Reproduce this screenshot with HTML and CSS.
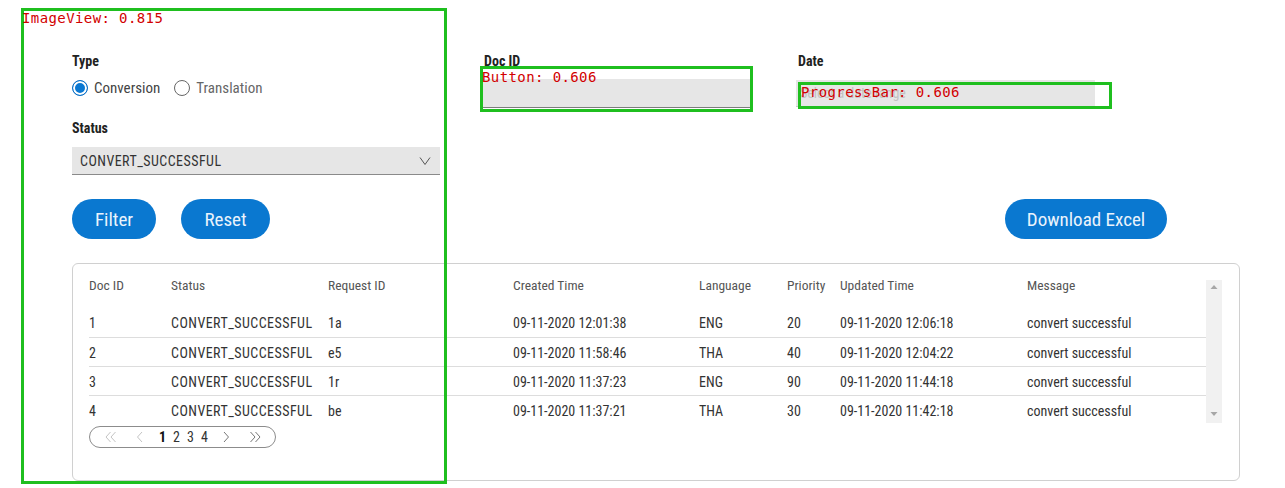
FILE: index.html
```html
<!DOCTYPE html>
<html lang="en">
<head>
<meta charset="utf-8">
<title>Documents</title>
<link rel="stylesheet" href="styles.css">
</head>
<body>
<div class="page">
  <div class="filters">
    <div class="col col-type">
      <div class="label">Type</div>
      <div class="radios">
        <span class="radio"><span class="dot dot-on"></span>Conversion</span>
        <span class="radio radio-off"><span class="dot"></span>Translation</span>
      </div>
      <div class="label label-status">Status</div>
      <div class="select">
        <span class="caps">CONVERT_SUCCESSFUL</span>
        <svg class="caret" width="12" height="10" viewBox="0 0 12 10"><polyline points="1,1.5 6,8.5 11,1.5" fill="none" stroke="#555" stroke-width="1"/></svg>
      </div>
    </div>
    <div class="col col-doc">
      <div class="label">Doc ID</div>
      <div class="input"></div>
    </div>
    <div class="col col-date">
      <div class="label">Date</div>
      <div class="input input-date">Select a date range</div>
    </div>
  </div>

  <div class="actions">
    <button class="btn btn-filter">Filter</button>
    <button class="btn btn-reset">Reset</button>
    <button class="btn btn-dl">Download Excel</button>
  </div>

  <div class="card">
    <div class="card-main">
      <table class="grid">
        <colgroup>
          <col class="c1"><col class="c2"><col class="c3"><col class="c4"><col class="c5"><col class="c6"><col class="c7"><col class="c8">
        </colgroup>
        <thead>
          <tr><th>Doc ID</th><th>Status</th><th>Request ID</th><th>Created Time</th><th>Language</th><th>Priority</th><th>Updated Time</th><th>Message</th></tr>
        </thead>
        <tbody>
          <tr><td>1</td><td class="caps">CONVERT_SUCCESSFUL</td><td>1a</td><td>09-11-2020 12:01:38</td><td>ENG</td><td>20</td><td>09-11-2020 12:06:18</td><td>convert successful</td></tr>
          <tr><td>2</td><td class="caps">CONVERT_SUCCESSFUL</td><td>e5</td><td>09-11-2020 11:58:46</td><td>THA</td><td>40</td><td>09-11-2020 12:04:22</td><td>convert successful</td></tr>
          <tr><td>3</td><td class="caps">CONVERT_SUCCESSFUL</td><td>1r</td><td>09-11-2020 11:37:23</td><td>ENG</td><td>90</td><td>09-11-2020 11:44:18</td><td>convert successful</td></tr>
          <tr class="last"><td>4</td><td class="caps">CONVERT_SUCCESSFUL</td><td>be</td><td>09-11-2020 11:37:21</td><td>THA</td><td>30</td><td>09-11-2020 11:42:18</td><td>convert successful</td></tr>
        </tbody>
      </table>
      <div class="pager">
        <svg class="pg pg-first" width="12" height="12" viewBox="0 0 12 12"><polyline points="5.5,1 1,6 5.5,11" fill="none" stroke="#c4c4c4" stroke-width="1"/><polyline points="10.5,1 6,6 10.5,11" fill="none" stroke="#c4c4c4" stroke-width="1"/></svg>
        <svg class="pg pg-prev" width="7" height="12" viewBox="0 0 7 12"><polyline points="6,1 1.5,6 6,11" fill="none" stroke="#c4c4c4" stroke-width="1"/></svg>
        <span class="pages"><span class="pnum cur">1</span><span class="pnum">2</span><span class="pnum">3</span><span class="pnum">4</span></span>
        <svg class="pg pg-next" width="7" height="12" viewBox="0 0 7 12"><polyline points="1,1 5.5,6 1,11" fill="none" stroke="#777" stroke-width="1"/></svg>
        <svg class="pg pg-last" width="12" height="12" viewBox="0 0 12 12"><polyline points="1.5,1 6,6 1.5,11" fill="none" stroke="#777" stroke-width="1"/><polyline points="6.5,1 11,6 6.5,11" fill="none" stroke="#777" stroke-width="1"/></svg>
      </div>
    </div>
    <div class="scrollbar">
      <svg width="16" height="10" viewBox="0 0 16 10"><polygon points="4.5,7 8,3 11.5,7" fill="#a6a6a6"/></svg>
      <svg width="16" height="10" viewBox="0 0 16 10"><polygon points="4.5,3 8,7 11.5,3" fill="#a6a6a6"/></svg>
    </div>
  </div>
</div>

<div class="det det-image"></div>
<div class="det-label det-label-image">ImageView: 0.815</div>
<div class="det det-button"></div>
<div class="det-label det-label-button">Button: 0.606</div>
<div class="det det-progress"></div>
<div class="det-label det-label-progress">ProgressBar: 0.606</div>
</body>
</html>
```

FILE: styles.css
```css
* { box-sizing: border-box; }

html, body {
  margin: 0;
  padding: 0;
  background: #ffffff;
}

body {
  width: 1285px;
  height: 488px;
  overflow: hidden;
  position: relative;
  font-family: "Liberation Sans Narrow", "Roboto Condensed", "DejaVu Sans Condensed", "Liberation Sans", sans-serif;
  color: #333333;
}

.page {
  padding: 52px 0 0 72px;
}

.caps { letter-spacing: 0.45px; }

/* ---------- filters ---------- */
.filters {
  display: flex;
  align-items: flex-start;
}

.col-type { width: 368px; }
.col-doc { width: 268px; margin-left: 42px; }
.col-date { width: 299px; margin-left: 46px; }

.label {
  font-size: 14px;
  line-height: 18px;
  font-weight: bold;
  color: #222222;
}

.col-doc .label,
.col-date .label { padding-left: 2px; }

.radios {
  display: flex;
  align-items: center;
  height: 20px;
  margin-top: 8px;
  gap: 14px;
}

.radio {
  display: flex;
  align-items: center;
  font-size: 15px;
  color: #444444;
}

.radio-off { color: #666666; }

.dot {
  width: 16px;
  height: 16px;
  border-radius: 50%;
  border: 1px solid #666666;
  background: #ffffff;
  margin-right: 6px;
  flex: none;
}

.dot-on {
  border: 1px solid #0a6fc6;
  background: #0a78d2;
  box-shadow: inset 0 0 0 2px #ffffff;
}

.label-status { margin-top: 21px; }

.select {
  margin-top: 10px;
  height: 28px;
  background: #e6e6e6;
  border-bottom: 1px solid #8a8a8a;
  display: flex;
  align-items: center;
  justify-content: space-between;
  padding: 0 9px 0 8px;
  font-size: 14px;
  color: #333333;
}

.input {
  margin-top: 9px;
  height: 29px;
  background: #e6e6e6;
  border-bottom: 1px solid #7c7c7c;
}

.input-date {
  margin-top: 10px;
  height: 27px;
  border-bottom: 1px solid #c8c8c8;
  font-size: 14px;
  line-height: 26px;
  color: #c2c2c2;
  padding-left: 4px;
}

/* ---------- actions ---------- */
.actions {
  display: flex;
  width: 1095px;
  margin-top: 24px;
  gap: 25px;
}

.btn {
  height: 40px;
  border: none;
  border-radius: 20px;
  background: #0a78d0;
  color: #eaf3fc;
  font-family: inherit;
  font-size: 19px;
  padding: 0;
  cursor: pointer;
}

.btn-filter { width: 84px; }
.btn-reset { width: 89px; }
.btn-dl { width: 162px; margin-left: auto; }

/* ---------- table card ---------- */
.card {
  margin-top: 24px;
  width: 1168px;
  height: 218px;
  border: 1px solid #d0d0d0;
  border-radius: 6px;
  padding: 10px 17px 0 16px;
  display: flex;
  align-items: flex-start;
}

.card-main {
  flex: 1;
}

.grid {
  width: 1117px;
  border-collapse: collapse;
  table-layout: fixed;
}

.c1 { width: 82px; }
.c2 { width: 157px; }
.c3 { width: 185px; }
.c4 { width: 186px; }
.c5 { width: 88px; }
.c6 { width: 53px; }
.c7 { width: 187px; }
.c8 { width: 179px; }

.grid th {
  text-align: left;
  font-weight: normal;
  font-size: 13.5px;
  line-height: 22px;
  color: #555555;
  padding: 0 0 12px 0;
  vertical-align: top;
  white-space: nowrap;
}

.grid td {
  font-size: 14px;
  height: 29px;
  line-height: 26px;
  padding: 2px 0 0 0;
  color: #333333;
  border-bottom: 1px solid #dddddd;
  white-space: nowrap;
  vertical-align: top;
}

.grid tr.last td { border-bottom: none; height: 28px; }

.pager {
  margin-top: 2px;
  width: 187px;
  height: 22px;
  border: 1px solid #8c8c8c;
  border-radius: 11px;
  display: flex;
  align-items: center;
  padding-left: 15px;
}

.pg { flex: none; }
.pg-prev { margin-left: 19px; }
.pages { display: flex; gap: 7px; margin-left: 16px; }
.pnum { font-size: 14px; color: #333333; line-height: 20px; }
.pnum.cur { font-weight: bold; color: #111111; }
.pg-next { margin-left: 15px; }
.pg-last { margin-left: 19px; }

.scrollbar {
  width: 16px;
  height: 143px;
  margin-top: 6px;
  background: #f1f1f1;
  display: flex;
  flex-direction: column;
  justify-content: space-between;
  padding: 2px 0 4px 0;
}

.scrollbar svg { display: block; }

/* ---------- detector overlay ---------- */
.det {
  position: absolute;
  border: 3px solid #1fbf1f;
  pointer-events: none;
}

.det-image { left: 21px; top: 8px; width: 426px; height: 476px; }
.det-button { left: 480px; top: 66px; width: 273px; height: 46px; }
.det-progress { left: 798px; top: 82px; width: 314px; height: 27px; }

.det-label {
  position: absolute;
  font-family: "DejaVu Sans Mono", "Liberation Mono", monospace;
  font-size: 14px;
  line-height: 14px;
  color: #d20000;
  white-space: nowrap;
  letter-spacing: 0.4px;
}

.det-label-image { left: 22px; top: 11px; }
.det-label-button { left: 482px; top: 70px; }
.det-label-progress { left: 801px; top: 85px; }
```
